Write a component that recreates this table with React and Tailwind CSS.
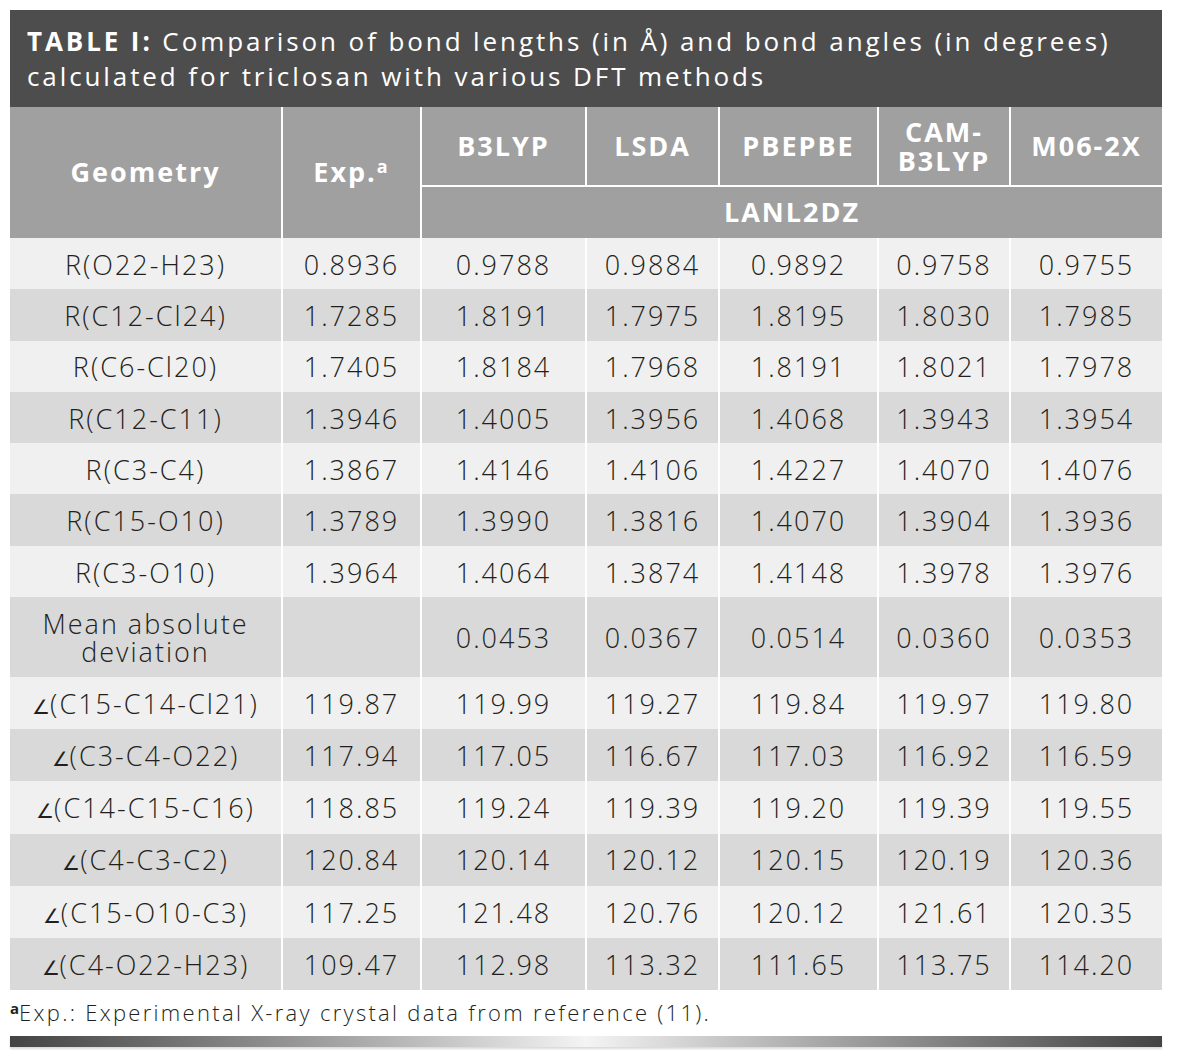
const rows = [
  ["R(O22-H23)", "0.8936", "0.9788", "0.9884", "0.9892", "0.9758", "0.9755"],
  ["R(C12-Cl24)", "1.7285", "1.8191", "1.7975", "1.8195", "1.8030", "1.7985"],
  ["R(C6-Cl20)", "1.7405", "1.8184", "1.7968", "1.8191", "1.8021", "1.7978"],
  ["R(C12-C11)", "1.3946", "1.4005", "1.3956", "1.4068", "1.3943", "1.3954"],
  ["R(C3-C4)", "1.3867", "1.4146", "1.4106", "1.4227", "1.4070", "1.4076"],
  ["R(C15-O10)", "1.3789", "1.3990", "1.3816", "1.4070", "1.3904", "1.3936"],
  ["R(C3-O10)", "1.3964", "1.4064", "1.3874", "1.4148", "1.3978", "1.3976"],
];

const angles = [
  ["(C15-C14-Cl21)", "119.87", "119.99", "119.27", "119.84", "119.97", "119.80"],
  ["(C3-C4-O22)", "117.94", "117.05", "116.67", "117.03", "116.92", "116.59"],
  ["(C14-C15-C16)", "118.85", "119.24", "119.39", "119.20", "119.39", "119.55"],
  ["(C4-C3-C2)", "120.84", "120.14", "120.12", "120.15", "120.19", "120.36"],
  ["(C15-O10-C3)", "117.25", "121.48", "120.76", "120.12", "121.61", "120.35"],
  ["(C4-O22-H23)", "109.47", "112.98", "113.32", "111.65", "113.75", "114.20"],
];

const widths = [272, 139, 165, 133, 159, 132, 152];

const Cell = ({ children, first }) => (
  <td className={`text-center align-middle ${first ? "" : "border-l-2 border-white"}`}>{children}</td>
);

const App = () => {
  return (
    <div className="bg-white w-[1178px] h-[1060px] pt-[10px] px-[10px] text-[#231f20]" style={{ fontFamily: '"Open Sans", "Liberation Sans", sans-serif' }}>
      {/* title */}
      <div className="bg-[#4d4d4d] text-white text-[26px] leading-[35px] px-[17px] pt-[14px] pb-[12px] h-[97px] w-[1152px] tracking-[2.9px] whitespace-nowrap">
        <span className="font-bold">TABLE I:</span> Comparison of bond lengths (in Å) and bond angles (in degrees)
        <br />
        calculated for triclosan with various DFT methods
      </div>

      <table className="table-fixed border-collapse w-[1152px] text-[27px] font-light tracking-[2px]">
        <colgroup>
          {widths.map((w, i) => (
            <col key={i} style={{ width: w }} />
          ))}
        </colgroup>
        <thead className="bg-[#a0a0a0] text-white">
          <tr className="h-[79px]">
            <th rowSpan={2} className="text-center align-middle font-bold">Geometry</th>
            <th rowSpan={2} className="text-center align-middle border-l-2 border-white font-bold">
              Exp.<sup className="text-[18px]">a</sup>
            </th>
            <th className="border-l-2 border-white font-bold">B3LYP</th>
            <th className="border-l-2 border-white font-bold">LSDA</th>
            <th className="border-l-2 border-white font-bold">PBEPBE</th>
            <th className="border-l-2 border-white font-bold leading-[29px]">CAM-<br />B3LYP</th>
            <th className="border-l-2 border-white font-bold">M06-2X</th>
          </tr>
          <tr className="h-[52px]">
            <th colSpan={5} className="border-l-2 border-t-2 border-white font-bold">LANL2DZ</th>
          </tr>
        </thead>
        <tbody>
          {rows.map((r, i) => (
            <tr key={r[0]} className={`h-[51.3px] ${i % 2 === 0 ? "bg-[#f0f0f0]" : "bg-[#d9d9d9]"}`}>
              {r.map((c, j) => (
                <Cell key={j} first={j === 0}>
                  <div className="pt-[3px]">{c}</div>
                </Cell>
              ))}
            </tr>
          ))}
          <tr className="h-[80px] bg-[#d9d9d9]">
            <Cell first>
              <div className="leading-[28px] pt-[2px]">Mean absolute<br />deviation</div>
            </Cell>
            <Cell></Cell>
            <Cell><div className="pt-[3px]">0.0453</div></Cell>
            <Cell><div className="pt-[3px]">0.0367</div></Cell>
            <Cell><div className="pt-[3px]">0.0514</div></Cell>
            <Cell><div className="pt-[3px]">0.0360</div></Cell>
            <Cell><div className="pt-[3px]">0.0353</div></Cell>
          </tr>
          {angles.map((r, i) => (
            <tr key={r[0]} className={`h-[52.2px] ${i % 2 === 0 ? "bg-[#f0f0f0]" : "bg-[#d9d9d9]"}`}>
              {r.map((c, j) => (
                <Cell key={j} first={j === 0}>
                  <div className="pt-[2px]">
                    {j === 0 ? (
                      <>
                        <span className="text-[20px] tracking-normal">∠</span>
                        {c}
                      </>
                    ) : (
                      c
                    )}
                  </div>
                </Cell>
              ))}
            </tr>
          ))}
        </tbody>
      </table>

      <div className="text-[22px] mt-[8px] leading-[28px] font-light tracking-[2.3px]">
        <sup className="text-[15px] font-bold tracking-normal">a</sup>Exp.: Experimental X-ray crystal data from reference (11).
      </div>

      <div className="mt-[10px] w-[1152px] h-[11px] bg-gradient-to-r from-[#444] via-[#f4f4f4] to-[#444] shadow-[0_2px_2px_rgba(0,0,0,0.15)]" />
    </div>
  );
};

export default App;
